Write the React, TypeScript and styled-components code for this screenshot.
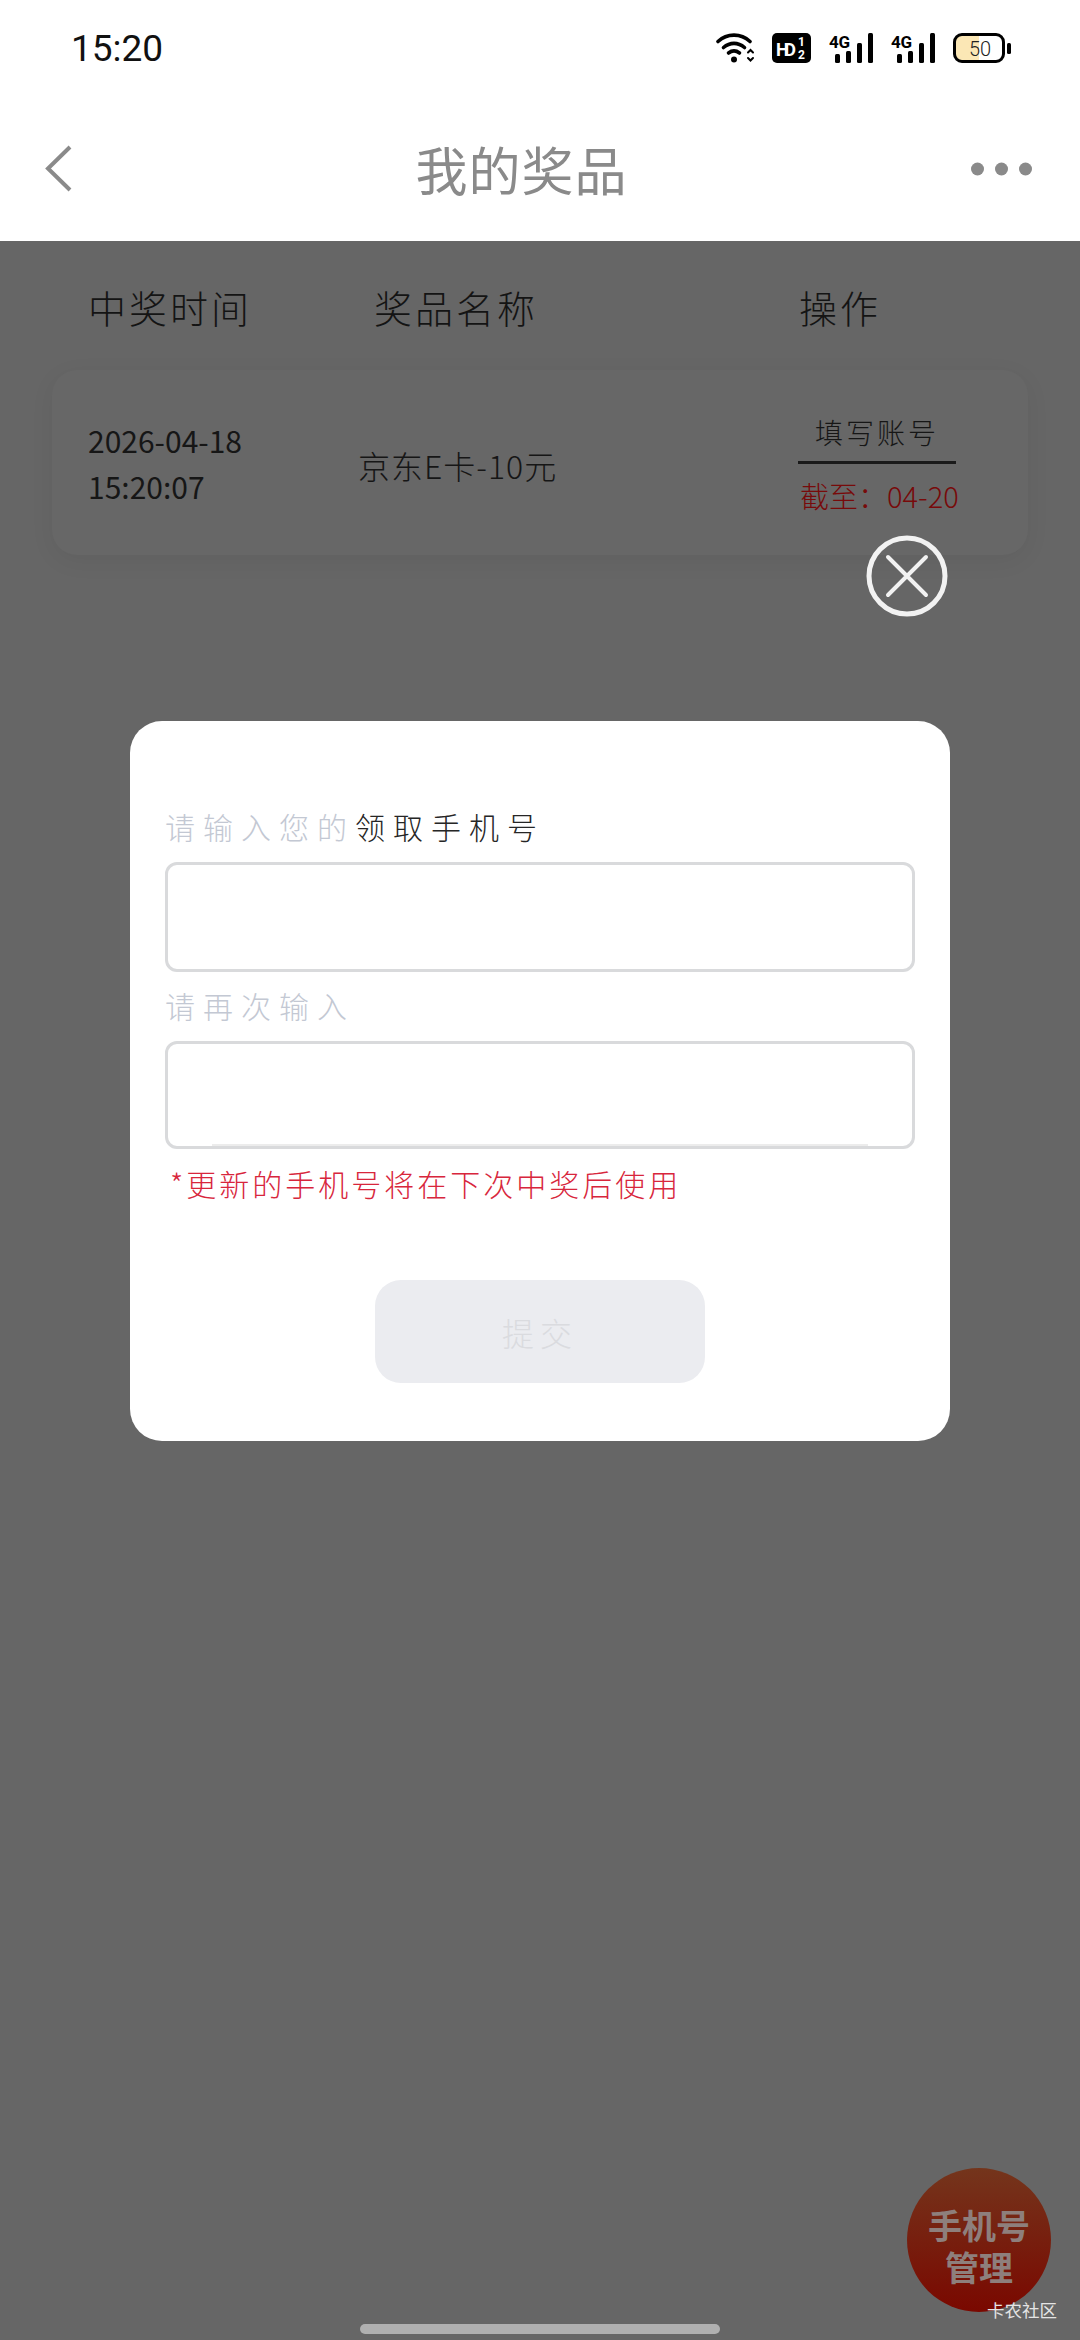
import { createGlobalStyle, styled } from "styled-components";

const GlobalStyle = createGlobalStyle`
    html, body {
        margin: 0;
        padding: 0;
        background: #666666;
    }
    * {
        box-sizing: border-box;
    }
`;

const cjk = `"Noto Sans CJK SC", "Noto Sans", sans-serif`;
const narrow = `"Liberation Sans Narrow", "Noto Sans CJK SC", sans-serif`;

const Page = styled.div`
    position: relative;
    width: 1080px;
    height: 2340px;
    overflow: hidden;
    background: #666666;
    font-family: ${cjk};
    font-weight: 300;
`;

const Top = styled.div`
    background: #ffffff;
`;

const StatusBar = styled.div`
    height: 96px;
    padding: 0 68px 0 71px;
    display: flex;
    align-items: center;
    justify-content: space-between;
`;

const Clock = styled.span`
    font-family: Roboto, sans-serif;
    font-size: 37px;
    font-weight: 400;
    color: #111111;
`;

const StatusIcons = styled.div`
    display: flex;
    align-items: center;
    gap: 0;
    height: 30px;
`;

const NavBar = styled.div`
    height: 145px;
    padding: 0 48px 0 45px;
    display: flex;
    align-items: center;
    justify-content: space-between;
`;

const Title = styled.h1`
    margin: 0;
    font-size: 52px;
    font-weight: 400;
    line-height: 60px;
    letter-spacing: 1px;
    color: #8a8a8a;
`;

const TableHead = styled.div`
    height: 129px;
    padding: 3px 0 0 88px;
    display: grid;
    grid-template-columns: 286px 425px 1fr;
    align-items: center;
`;

const HeadCell = styled.span`
    font-size: 38px;
    line-height: 44px;
    letter-spacing: 3px;
    color: #141414;
`;

const PrizeCard = styled.div`
    width: 976px;
    height: 185px;
    margin-left: 52px;
    padding-left: 36px;
    display: grid;
    grid-template-columns: 270px 440px 1fr;
    align-items: center;
    border-radius: 25px;
    background: #676767;
    box-shadow: 0 6px 24px rgba(0, 0, 0, 0.06);
    color: #161616;
`;

const DateCell = styled.div`
    font-family: ${narrow};
    font-size: 30px;
    line-height: 46px;
    font-weight: 400;
`;

const PrizeName = styled.div`
    font-size: 32px;
    line-height: 40px;
    letter-spacing: 1px;
    margin-top: 5px;
`;

const ActionCell = styled.div`
    align-self: start;
    padding-top: 38px;
    width: 172px;
`;

const FillAccount = styled.div`
    width: 158px;
    height: 56px;
    padding: 0 0 5px 17px;
    border-bottom: 3px solid #1a1a1a;
    font-size: 28px;
    line-height: 48px;
    letter-spacing: 3px;
`;

const Deadline = styled.div`
    margin-top: 11px;
    margin-left: 2px;
    font-size: 29px;
    line-height: 40px;
    white-space: nowrap;
    color: #780a0a;
`;

const CloseButton = styled.svg`
    position: absolute;
    left: 866px;
    top: 535px;
    width: 82px;
    height: 82px;
`;

const Dialog = styled.div`
    position: absolute;
    left: 130px;
    top: 721px;
    width: 820px;
    height: 720px;
    padding: 85px 35px 0;
    border-radius: 32px;
    background: #ffffff;
`;

const Label = styled.div`
    font-size: 30px;
    line-height: 40px;
    letter-spacing: 8px;
    color: #c3c8d3;
    & + & {
        letter-spacing: 6px;
    }
`;

const Dark = styled.span`
    color: #262626;
`;

const Field = styled.div<{ $height: number; $line?: boolean }>`
    position: relative;
    height: ${(p) => p.$height}px;
    margin: 16px 0 13px;
    border: 3px solid #d9dadc;
    border-radius: 12px;
    background: #ffffff;
    &::after {
        content: "";
        display: ${(p) => (p.$line ? "block" : "none")};
        position: absolute;
        left: 44px;
        right: 44px;
        bottom: 0;
        height: 2px;
        background: #ececec;
    }
`;

const Note = styled.div`
    margin-top: 14px;
    margin-left: 5px;
    font-size: 30px;
    line-height: 40px;
    letter-spacing: 3px;
    color: #d8263c;
`;

const Submit = styled.div`
    width: 330px;
    height: 103px;
    margin: 77px auto 0;
    display: flex;
    align-items: center;
    justify-content: center;
    border-radius: 26px;
    background: #ebecf0;
    font-size: 32px;
    letter-spacing: 6px;
    color: #dadbdf;
`;

const PhoneBadge = styled.div`
    position: absolute;
    left: 907px;
    top: 2168px;
    width: 144px;
    height: 144px;
    padding-top: 36px;
    border-radius: 50%;
    background: linear-gradient(#74351c, #7a0800);
    font-size: 34px;
    font-weight: 700;
    line-height: 42px;
    text-align: center;
    color: #8e7f7c;
`;

const Watermark = styled.div`
    position: absolute;
    left: 987px;
    top: 2298px;
    font-size: 17.5px;
    font-weight: 400;
    line-height: 24px;
    color: #e4e4e4;
`;

const HomeBar = styled.div`
    position: absolute;
    left: 360px;
    top: 2324px;
    width: 360px;
    height: 10px;
    border-radius: 5px;
    background: #b0b0b0;
`;

const WifiIcon = () => (
    <svg width="40" height="30" viewBox="0 0 40 30" fill="none" stroke="#000" strokeWidth="3.6" strokeLinecap="round">
        <path d="M2 8.5 C11 0 25 0 34 8.5" />
        <path d="M7.5 14.5 C14 9 22 9 28.5 14.5" />
        <path d="M12.5 20 C16 17.4 20 17.4 23.5 20" />
        <circle cx="18" cy="26.5" r="3" fill="#000" stroke="none" />
        <path d="M32 19.5 l2.5 -2.5 l2.5 2.5 M32 25 l2.5 2.5 l2.5 -2.5" strokeWidth="2" />
    </svg>
);

const HdIcon = () => (
    <svg width="39" height="30" viewBox="0 0 39 30" style={{ marginLeft: 16 }}>
        <rect width="39" height="30" rx="5" fill="#000" />
        <text x="4" y="23" fontFamily="Roboto" fontSize="18" fontWeight="700" fill="#fff" textLength="20">HD</text>
        <text x="26" y="13" fontFamily="Roboto" fontSize="12" fontWeight="700" fill="#fff">1</text>
        <text x="26" y="26" fontFamily="Roboto" fontSize="12" fontWeight="700" fill="#fff">2</text>
    </svg>
);

const SignalIcon = ({ gap }: { gap: number }) => (
    <svg width="44" height="30" viewBox="0 0 44 30" style={{ marginLeft: gap }}>
        <text x="0" y="15" fontFamily="Roboto" fontSize="17" fontWeight="700" fill="#000" textLength="21">4G</text>
        <rect x="6" y="21" width="5" height="9" rx="1.5" fill="#000" />
        <rect x="17" y="18" width="5" height="12" rx="1.5" fill="#000" />
        <rect x="28" y="10" width="5" height="20" rx="1.5" fill="#000" />
        <rect x="39" y="0" width="5" height="30" rx="1.5" fill="#000" />
    </svg>
);

const BatteryIcon = () => (
    <svg width="59" height="30" viewBox="0 0 59 30" style={{ marginLeft: 18 }}>
        <path d="M8 3 H26 V27 H8 A5 5 0 0 1 3 22 V8 A5 5 0 0 1 8 3 Z" fill="#fbe7b5" />
        <rect x="1.5" y="1.5" width="49" height="27" rx="7.5" fill="none" stroke="#000" strokeWidth="3" />
        <rect x="54" y="10" width="4" height="11" rx="1.5" fill="#000" />
        <text x="16" y="22.5" fontFamily="Roboto" fontSize="20" fill="#222">50</text>
    </svg>
);

const BackIcon = () => (
    <svg width="27" height="47" viewBox="0 0 27 47" fill="none" stroke="#8a8a8a" strokeWidth="4">
        <path d="M25 2 L3 23.5 L25 45" />
    </svg>
);

const MoreIcon = () => (
    <svg width="61" height="14" viewBox="0 0 61 14" fill="#8a8a8a">
        <circle cx="6.5" cy="7" r="6.5" />
        <circle cx="30.5" cy="7" r="6.5" />
        <circle cx="54.5" cy="7" r="6.5" />
    </svg>
);

export default function App() {
    return (
        <Page>
            <GlobalStyle />
            <Top>
                <StatusBar>
                    <Clock>15:20</Clock>
                    <StatusIcons>
                        <WifiIcon />
                        <HdIcon />
                        <SignalIcon gap={18} />
                        <SignalIcon gap={18} />
                        <BatteryIcon />
                    </StatusIcons>
                </StatusBar>
                <NavBar>
                    <BackIcon />
                    <Title>我的奖品</Title>
                    <MoreIcon />
                </NavBar>
            </Top>
            <TableHead>
                <HeadCell>中奖时间</HeadCell>
                <HeadCell>奖品名称</HeadCell>
                <HeadCell>操作</HeadCell>
            </TableHead>
            <PrizeCard>
                <DateCell>
                    2026-04-18
                    <br />
                    15:20:07
                </DateCell>
                <PrizeName>京东E卡-10元</PrizeName>
                <ActionCell>
                    <FillAccount>填写账号</FillAccount>
                    <Deadline>截至：04-20</Deadline>
                </ActionCell>
            </PrizeCard>
            <CloseButton viewBox="0 0 82 82" fill="none" stroke="#f2f2f2">
                <circle cx="41" cy="41" r="38" strokeWidth="5" />
                <path d="M22 22 L60 60 M60 22 L22 60" strokeWidth="4" strokeLinecap="round" />
            </CloseButton>
            <Dialog>
                <Label>
                    请输入您的<Dark>领取手机号</Dark>
                </Label>
                <Field $height={110} />
                <Label>请再次输入</Label>
                <Field $height={108} $line />
                <Note>*更新的手机号将在下次中奖后使用</Note>
                <Submit>提交</Submit>
            </Dialog>
            <PhoneBadge>
                手机号
                <br />
                管理
            </PhoneBadge>
            <Watermark>卡农社区</Watermark>
            <HomeBar />
        </Page>
    );
}
